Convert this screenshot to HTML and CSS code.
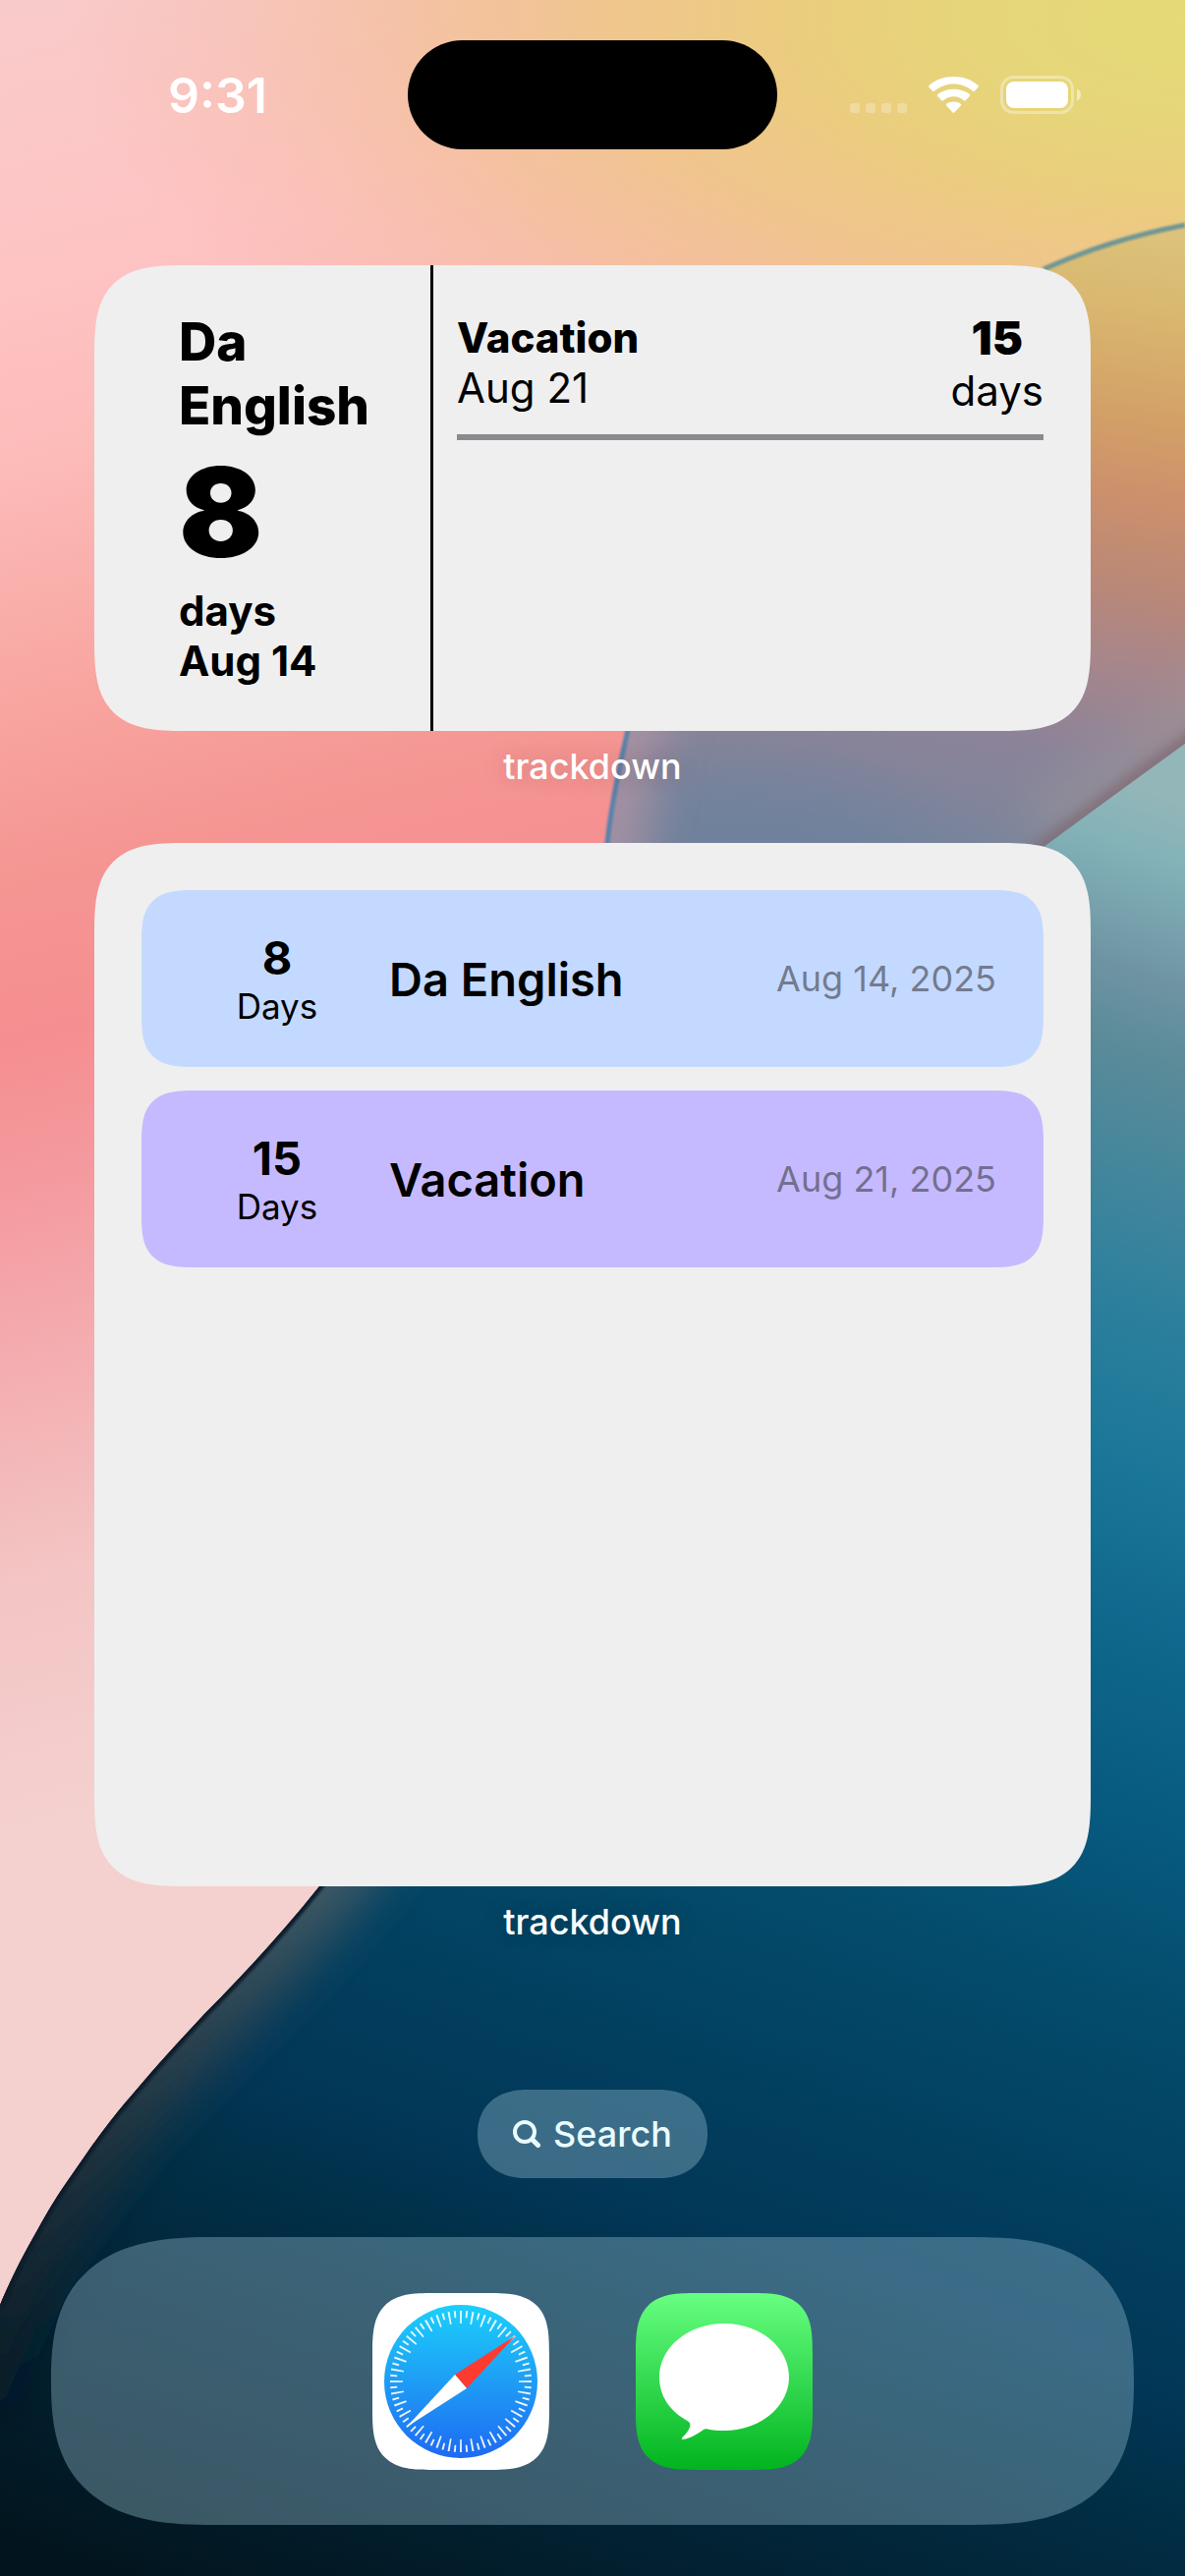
FILE: index.html
```html
<!DOCTYPE html>
<html lang="en">
<head>
<meta charset="utf-8">
<meta name="viewport" content="width=device-width, initial-scale=1">
<title>Home Screen</title>
<link rel="stylesheet" href="styles.css">
</head>
<body>
<div class="screen">
  <svg class="wallpaper" viewBox="0 0 1206 2622" preserveAspectRatio="xMidYMid slice" aria-hidden="true">
    <defs>
      <linearGradient id="pink" gradientUnits="userSpaceOnUse" x1="0" y1="0" x2="500" y2="2000">
        <stop offset="0" stop-color="#f8cbca"/>
        <stop offset=".127" stop-color="#fec4c4"/>
        <stop offset=".22" stop-color="#fcbcba"/>
        <stop offset=".34" stop-color="#f8a5a0"/>
        <stop offset=".42" stop-color="#f59693"/>
        <stop offset=".5" stop-color="#f58e90"/>
        <stop offset=".57" stop-color="#f49a9f"/>
        <stop offset=".66" stop-color="#f4aeb1"/>
        <stop offset=".76" stop-color="#f3c5c4"/>
        <stop offset=".88" stop-color="#f4d0cf"/>
        <stop offset="1" stop-color="#f4d0ce"/>
      </linearGradient>
      <radialGradient id="yellow" gradientUnits="userSpaceOnUse" cx="0" cy="0" r="1" gradientTransform="translate(1230 20) scale(1160 520)">
        <stop offset="0" stop-color="#e4da76"/>
        <stop offset=".2" stop-color="#e6d679"/>
        <stop offset=".36" stop-color="#ebcd7e"/>
        <stop offset=".54" stop-color="#efc58a" stop-opacity=".92"/>
        <stop offset=".68" stop-color="#f1c092" stop-opacity=".7"/>
        <stop offset=".84" stop-color="#f2bb98" stop-opacity=".3"/>
        <stop offset="1" stop-color="#f5b09a" stop-opacity="0"/>
      </radialGradient>
      <linearGradient id="orb" gradientUnits="userSpaceOnUse" x1="1150" y1="220" x2="1040" y2="880">
        <stop offset="0" stop-color="#ddc47c"/>
        <stop offset=".14" stop-color="#d9b76f"/>
        <stop offset=".3" stop-color="#d3a067"/>
        <stop offset=".42" stop-color="#cc906c"/>
        <stop offset=".56" stop-color="#b98878"/>
        <stop offset=".68" stop-color="#a6868c"/>
        <stop offset=".82" stop-color="#8b8399"/>
        <stop offset="1" stop-color="#78859c"/>
      </linearGradient>
      <radialGradient id="orbShade" gradientUnits="userSpaceOnUse" cx="0" cy="0" r="1" gradientTransform="translate(770 900) scale(260 150)">
        <stop offset="0" stop-color="#6b7f9c"/>
        <stop offset="1" stop-color="#6b7f9c" stop-opacity="0"/>
      </radialGradient>
      <linearGradient id="sea" gradientUnits="userSpaceOnUse" x1="1150" y1="800" x2="464" y2="2760">
        <stop offset="0" stop-color="#93b6b8"/>
        <stop offset=".03" stop-color="#82b2b8"/>
        <stop offset=".085" stop-color="#6e94a3"/>
        <stop offset=".12" stop-color="#5c8b99"/>
        <stop offset=".18" stop-color="#43869c"/>
        <stop offset=".244" stop-color="#2b7f9d"/>
        <stop offset=".317" stop-color="#1a7698"/>
        <stop offset=".4" stop-color="#0e668b"/>
        <stop offset=".484" stop-color="#07597e"/>
        <stop offset=".567" stop-color="#044b6b"/>
        <stop offset=".68" stop-color="#023d5d"/>
        <stop offset=".735" stop-color="#023757"/>
        <stop offset=".79" stop-color="#012f47"/>
        <stop offset=".83" stop-color="#02293e"/>
        <stop offset=".91" stop-color="#021f2e"/>
        <stop offset="1" stop-color="#02141d"/>
      </linearGradient>
      <linearGradient id="rim" gradientUnits="userSpaceOnUse" x1="0" y1="1900" x2="0" y2="2420">
        <stop offset="0" stop-color="#5a6468" stop-opacity=".7"/>
        <stop offset=".5" stop-color="#30383c" stop-opacity=".7"/>
        <stop offset="1" stop-color="#141a20" stop-opacity=".5"/>
      </linearGradient>
      <filter id="soft" filterUnits="userSpaceOnUse" x="-200" y="0" width="1606" height="2822"><feGaussianBlur stdDeviation="24"/></filter>
      <filter id="fine" filterUnits="userSpaceOnUse" x="-200" y="0" width="1606" height="2822"><feGaussianBlur stdDeviation="7"/></filter>
      <filter id="hair" filterUnits="userSpaceOnUse" x="-200" y="0" width="1606" height="2822"><feGaussianBlur stdDeviation="1"/></filter>
      <clipPath id="orbClip"><path d="M1206 229C1150 240 1110 253 1062 274C850 370 690 540 639 743C628 790 622 820 618 858V960H1206Z"/></clipPath>
      <clipPath id="seaClip"><path d="M1206 757Q1130 812 1065 860L600 1300L325 1920C290 1964 250 2008 208 2050C180 2080 160 2102 138 2128C110 2160 95 2182 77 2208C60 2232 50 2248 38 2270C22 2298 12 2318 0 2346V2622H1206Z"/></clipPath>
    </defs>
    <rect width="1206" height="2622" fill="url(#pink)"/>
    <rect width="1206" height="2622" fill="url(#yellow)"/>
    <g clip-path="url(#orbClip)">
      <rect x="600" y="200" width="606" height="760" fill="url(#orb)"/>
      <rect x="600" y="700" width="606" height="260" fill="url(#orbShade)"/>
      <path d="M655 680L639 743C628 790 622 820 618 900" fill="none" stroke="#b294a4" stroke-width="70" opacity=".8" filter="url(#soft)"/>
      <path d="M1280 700L1206 757Q1130 812 1065 860" fill="none" stroke="#a09a98" stroke-width="100" opacity=".4" filter="url(#soft)"/>
      <path d="M1280 700L1206 757Q1130 812 1065 860L1000 920" fill="none" stroke="#7c646c" stroke-width="14" opacity=".8" filter="url(#fine)"/>
    </g>
    <path d="M1206 229C1150 240 1110 253 1062 274" fill="none" stroke="#6f9694" stroke-width="5" filter="url(#hair)"/>
    <path d="M639 743C628 790 622 820 618 858V900" fill="none" stroke="#5a82ab" stroke-width="5" filter="url(#hair)"/>
    <g clip-path="url(#seaClip)">
      <rect y="700" width="1206" height="1922" fill="url(#sea)"/>
      <path d="M380 1850L325 1920C290 1964 250 2008 208 2050C180 2080 160 2102 138 2128C110 2160 95 2182 77 2208C60 2232 50 2248 38 2270C22 2298 12 2318 0 2346L-40 2440" fill="none" stroke="url(#rim)" stroke-width="84" filter="url(#soft)"/>
      <path d="M380 1850L325 1920C290 1964 250 2008 208 2050C180 2080 160 2102 138 2128C110 2160 95 2182 77 2208C60 2232 50 2248 38 2270C22 2298 12 2318 0 2346" fill="none" stroke="#0c1c2c" stroke-width="8" filter="url(#hair)"/>
    </g>
  </svg>

  <header class="status">
    <time class="clock" datetime="09:31">9:31</time>
    <div class="island"></div>
    <svg class="indicators" viewBox="0 0 236 40" role="img" aria-label="No signal, Wi-Fi, battery full">
      <g fill="#fff" opacity=".26">
        <rect x="0" y="28" width="10" height="10" rx="3"/>
        <rect x="16" y="28" width="10" height="10" rx="3"/>
        <rect x="32" y="28" width="10" height="10" rx="3"/>
        <rect x="48" y="28" width="10" height="10" rx="3"/>
      </g>
      <g fill="#fff">
        <path d="M80.5 11.8a1.3 1.3 0 0 1 0-1.9C86.800 4.300 95.700 1 105.500 1s18.700 3.300 25 8.900a1.300 1.300 0 0 1 0 1.900l-3.700 3.900a1.300 1.300 0 0 1-1.800 0C119.800 11.200 112.900 8.500 105.500 8.500S91.200 11.200 86 15.700a1.300 1.300 0 0 1-1.800 0Z"/>
        <path d="M89.200 21a1.300 1.300 0 0 1 0-1.900C93.500 15.700 99.200 13.700 105.500 13.700s12 2 16.300 5.400a1.300 1.300 0 0 1 0 1.900l-4.100 4.300a1.300 1.300 0 0 1-1.800 0C113 22.700 109.500 21.200 105.500 21.200S98 22.700 95.100 25.300a1.300 1.300 0 0 1-1.800 0Z"/>
        <path d="M98.200 30.500a1.200 1.200 0 0 1 0-1.800C100.200 27.200 102.700 26.400 105.500 26.400s5.300.8 7.300 2.300a1.200 1.200 0 0 1 0 1.800l-6.500 6.900a1.200 1.200 0 0 1-1.700 0Z"/>
      </g>
      <rect x="154.500" y="1.500" width="72" height="36" rx="12" fill="none" stroke="#fff" stroke-width="3" opacity=".36"/>
      <rect x="159" y="6" width="63" height="27" rx="8" fill="#fff"/>
      <path d="M231 13.500c2.500 1 4 3.300 4 6s-1.500 5-4 6Z" fill="#fff" opacity=".5"/>
    </svg>
  </header>

  <main class="widgets">
    <figure class="slot">
      <section class="widget medium">
        <div class="next">
          <h2 class="next-title">Da English</h2>
          <p class="next-count">8</p>
          <p class="next-meta">days</p>
          <p class="next-meta">Aug 14</p>
        </div>
        <div class="upcoming">
          <div class="upcoming-item">
            <div>
              <h3 class="upcoming-title">Vacation</h3>
              <p class="upcoming-text">Aug 21</p>
            </div>
            <div class="upcoming-count">
              <p class="upcoming-number">15</p>
              <p class="upcoming-text">days</p>
            </div>
          </div>
        </div>
      </section>
      <figcaption class="label">trackdown</figcaption>
    </figure>

    <figure class="slot">
      <section class="widget large">
        <ul class="events">
          <li class="event blue">
            <div class="event-count">
              <p class="event-number">8</p>
              <p class="event-unit">Days</p>
            </div>
            <h3 class="event-title">Da English</h3>
            <time class="event-date" datetime="2025-08-14">Aug 14, 2025</time>
          </li>
          <li class="event purple">
            <div class="event-count">
              <p class="event-number">15</p>
              <p class="event-unit">Days</p>
            </div>
            <h3 class="event-title">Vacation</h3>
            <time class="event-date" datetime="2025-08-21">Aug 21, 2025</time>
          </li>
        </ul>
      </section>
      <figcaption class="label">trackdown</figcaption>
    </figure>
  </main>

  <button class="search" type="button">
    <svg class="search-icon" viewBox="0 0 28 28" aria-hidden="true">
      <circle cx="12" cy="12" r="10" fill="none" stroke="#e9fcff" stroke-width="4"/>
      <path d="M19.500 19.500L25.500 25.500" stroke="#e9fcff" stroke-width="5" stroke-linecap="round"/>
    </svg>
    Search
  </button>

  <nav class="dock" aria-label="Dock">
    <a class="app safari" href="#safari" aria-label="Safari">
      <svg viewBox="0 0 180 180" aria-hidden="true">
        <defs>
          <linearGradient id="dial" x1="0" y1="0" x2="0" y2="1">
            <stop offset="0" stop-color="#1bd0fc"/>
            <stop offset=".5" stop-color="#1e9df5"/>
            <stop offset="1" stop-color="#1e6af2"/>
          </linearGradient>
        </defs>
        <circle cx="90" cy="90" r="78" fill="url(#dial)"/>
        <circle class="ticks-long" cx="90" cy="90" r="65.500" pathLength="360"/>
        <circle class="ticks-short" cx="90" cy="90" r="68.500" pathLength="360"/>
        <path d="M145.500 43.500L84 83L96 97Z" fill="#ff3b30"/>
        <path d="M34.500 136.500L84 83L96 97Z" fill="#fff"/>
      </svg>
    </a>
    <a class="app messages" href="#messages" aria-label="Messages">
      <svg viewBox="0 0 180 180" aria-hidden="true">
        <path d="M90 31c36.500 0 66 24.400 66 54.500S126.500 140 90 140c-6 0-11.500-.6-17-1.600-2-.3-3.500.4-5 1.300-5 3.200-12 8.300-20 9.200-1.500.1-1.600-1-.6-2 4-3.800 8.200-8.800 8-13.200-.1-1.800-1.200-2.700-3-3.800C35 120.500 24 105 24 85.500 24 55.400 53.500 31 90 31Z" fill="#fff"/>
      </svg>
    </a>
  </nav>
</div>
</body>
</html>
```

FILE: styles.css
```css
* {
  box-sizing: border-box;
  margin: 0;
  padding: 0;
}

body {
  font-family: Inter, "Liberation Sans", sans-serif;
  color: #000;
}

.screen {
  position: relative;
  isolation: isolate;
  display: flex;
  flex-direction: column;
  min-height: 100vh;
  padding: 41px 52px 52px;
}

/* Wallpaper sits behind everything and crops to fill the screen. */
.wallpaper {
  position: absolute;
  inset: 0;
  z-index: -1;
  width: 100%;
  height: 100%;
}

/* Status bar */
.status {
  display: grid;
  grid-template-columns: 1fr 376px 1fr;
  align-items: center;
  height: 111px;
}

.clock {
  justify-self: center;
  padding-right: 24px;
  font-size: 50px;
  line-height: 60px;
  font-weight: 600;
  color: #fff;
}

.island {
  height: 111px;
  border-radius: 56px;
  background: #000;
}

.indicators {
  justify-self: end;
  width: 236px;
  height: 40px;
  margin-right: 53px;
}

/* Widgets */
.widgets {
  display: flex;
  flex-direction: column;
  gap: 56px;
  padding: 118px 44px 0;
}

.slot {
  display: flex;
  flex-direction: column;
  gap: 14px;
}

.widget {
  border-radius: 68px;
  background: #efefef;
  overflow: hidden;
}

.label {
  text-align: center;
  font-size: 36px;
  line-height: 44px;
  font-weight: 500;
  color: #fff;
  text-shadow: 0 0 24px rgba(0, 0, 0, .2);
}

/* Medium widget: next event beside the upcoming ones */
.medium {
  display: flex;
  min-height: 474px;
}

.next {
  flex: 0 0 345px;
  padding: 46px 40px 46px 86px;
  border-right: 3px solid #000;
}

.next-title {
  font-size: 53px;
  line-height: 65px;
  font-weight: 800;
}

.next-count {
  font-size: 126px;
  line-height: 150px;
  font-weight: 900;
}

.next-meta {
  font-size: 42px;
  line-height: 51px;
  font-weight: 700;
}

.upcoming {
  flex: 1;
  padding: 45px 48px 45px 24px;
}

.upcoming-item {
  display: flex;
  align-items: center;
  justify-content: space-between;
  padding-bottom: 19px;
  border-bottom: 6px solid #8a8a8e;
}

.upcoming-title {
  font-size: 42px;
  line-height: 51px;
  font-weight: 800;
}

.upcoming-text {
  font-size: 42px;
  line-height: 51px;
}

.upcoming-count {
  text-align: center;
}

.upcoming-number {
  font-size: 47px;
  line-height: 57px;
  font-weight: 900;
}

/* Large widget: list of events */
.large {
  min-height: 1062px;
  padding: 48px;
}

.events {
  display: flex;
  flex-direction: column;
  gap: 24px;
  list-style: none;
}

.event {
  display: flex;
  align-items: center;
  gap: 24px;
  min-height: 180px;
  padding: 0 48px;
  border-radius: 38px;
}

.blue {
  background: #c4d9ff;
}

.purple {
  background: #c5baff;
}

.event-count {
  flex: 0 0 180px;
  text-align: center;
}

.event-number {
  font-size: 47px;
  line-height: 57px;
  font-weight: 700;
}

.event-unit {
  font-size: 35px;
  line-height: 43px;
}

.event-title {
  flex: 1;
  font-size: 47px;
  line-height: 57px;
  font-weight: 600;
}

.event-date {
  font-size: 36px;
  line-height: 43px;
  color: rgba(60, 60, 67, .6);
}

/* Search pill */
.search {
  display: flex;
  align-items: center;
  align-self: center;
  gap: 13px;
  height: 90px;
  margin-top: auto;
  padding: 0 36px;
  border: 0;
  border-radius: 45px;
  background: rgba(160, 200, 215, .36);
  font: 500 36px/44px Inter, "Liberation Sans", sans-serif;
  color: #e9fcff;
}

.search-icon {
  width: 28px;
  height: 28px;
}

/* Dock */
.dock {
  display: flex;
  justify-content: center;
  align-items: center;
  gap: 88px;
  margin-top: 60px;
  padding: 57px 56px 56px;
  border-radius: 116px;
  background: rgba(160, 200, 215, .36);
}

.app {
  display: block;
  width: 180px;
  height: 180px;
  border-radius: 42px;
}

.app svg {
  display: block;
}

.safari {
  background: #fff;
}

.messages {
  background: linear-gradient(#67ff81, #01b41f);
}

.ticks-long,
.ticks-short {
  fill: none;
  stroke: #fff;
  opacity: .9;
}

.ticks-long {
  stroke-width: 13px;
  stroke-dasharray: 1.6 8.4;
  stroke-dashoffset: .8;
}

.ticks-short {
  stroke-width: 7px;
  stroke-dasharray: 1.6 8.4;
  stroke-dashoffset: 5.8;
}

/* Continuous-curvature corners where the browser can draw them. */
@supports (corner-shape: squircle) {
  .widget { border-radius: 94px; corner-shape: superellipse(1.6); }
  .event { border-radius: 55px; corner-shape: superellipse(1.6); }
  .app { border-radius: 62px; corner-shape: superellipse(1.6); }
  .dock { border-radius: 165px / 146px; corner-shape: superellipse(1.4); }
  .search { border-radius: 50px / 45px; corner-shape: superellipse(1.15); }
}
```
